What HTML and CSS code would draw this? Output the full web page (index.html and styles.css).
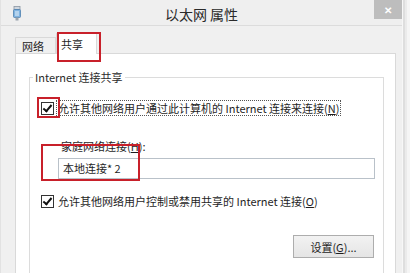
FILE: index.html
```html
<!DOCTYPE html>
<html lang="zh-CN">
<head>
  <meta charset="UTF-8" />
  <title>以太网 属性</title>
  <link rel="stylesheet" href="styles.css">
</head>
<body>

  <div class="screen">
    <div class="window">

      <div class="titlebar">
        <svg class="app-icon" width="8" height="15" viewBox="0 0 8 15">
          <rect x="1" y="0.5" width="6" height="3" fill="#cfd6de" stroke="#8a96a3" stroke-width="0.8"/>
          <rect x="0.5" y="3.5" width="7" height="8" rx="1" fill="#7fb3e0" stroke="#4d7fae" stroke-width="0.8"/>
          <line x1="3" y1="5" x2="3" y2="10" stroke="#e8f2fb" stroke-width="1"/>
          <line x1="5" y1="5" x2="5" y2="10" stroke="#e8f2fb" stroke-width="1"/>
          <rect x="2.5" y="11.5" width="3" height="3" fill="#9aa4ae"/>
        </svg>
        <div class="title">以太网&nbsp;属性</div>
        <div class="close">✕</div>
      </div>

      <div class="client">
        <div class="tabs">
          <div class="tab">网络</div>
          <div class="tab active">共享</div>
        </div>

        <div class="panel">
          <fieldset class="group">
            <legend>Internet 连接共享</legend>

            <div class="check-row">
              <span class="box checked"></span>
              <span class="check-text focus">允许其他网络用户通过此计算机的 Internet 连接来连接(<u>N</u>)</span>
            </div>

            <div class="field-label">家庭网络连接(<u>H</u>):</div>
            <div class="input">本地连接* 2</div>

            <div class="check-row second">
              <span class="box checked"></span>
              <span class="check-text">允许其他网络用户控制或禁用共享的 Internet 连接(<u>O</u>)</span>
            </div>

            <div class="actions">
              <button class="btn">设置(<u>G</u>)...</button>
            </div>
          </fieldset>
        </div>
      </div>

      <div class="mark mark-tab"></div>
      <div class="mark mark-check"></div>
      <div class="mark mark-input"></div>
    </div>

    <div class="frame"></div>
  </div>

</body>
</html>
```

FILE: styles.css
```css
body {
  margin: 0;
  font-family: "Noto Sans CJK SC", "Noto Sans", sans-serif;
  font-size: 11px;
  color: #1e1e1e;
  background: #f0f0f0;
}

.screen {
  display: flex;
  width: 410px;
  height: 273px;
  overflow: hidden;
}

.window {
  position: relative;
  width: 401px;
  background: #f0f0f0;
  border-left: 1px solid #e2e2e2;
}

.frame {
  flex: 1;
  background: #ebebeb;
  border-left: 1px solid #f7f7f7;
  box-shadow: inset 2px 0 0 #dedede, inset -3px 0 0 #f5f5f5;
}

/* title bar */

.titlebar {
  display: grid;
  grid-template-columns: 1fr auto 1fr;
  height: 25px;
  border-bottom: 1px solid #dcdcdc;
  background: #efefef;
}

.app-icon {
  margin: 6px 0 0 12px;
}

.title {
  font-size: 14px;
  line-height: 18px;
  padding-top: 5px;
  color: #2a2a2a;
}

.close {
  justify-self: end;
  width: 28px;
  height: 19px;
  background: #bdbdbd;
  color: #fff;
  font-size: 10px;
  font-weight: bold;
  line-height: 19px;
  text-align: center;
}

/* tabs */

.client {
  padding: 7px 6px 0 14px;
}

.tabs {
  display: flex;
  align-items: flex-end;
  height: 20px;
}

.tab {
  height: 16px;
  line-height: 16px;
  padding: 0 8px 0 6px;
  border: 1px solid #d9d9d9;
  border-bottom: none;
  background: #f0f0f0;
  box-sizing: border-box;
  width: 41px;
}

.tab.active {
  height: 21px;
  width: 41px;
  margin-bottom: -1px;
  padding: 2px 0 0 4px;
  background: #fff;
  position: relative;
  z-index: 1;
}

.panel {
  background: #fff;
  border: 1px solid #d9d9d9;
  height: 240px;
  padding: 0 11px 0 13px;
}

/* group box */

.group {
  margin: 16px 0 0;
  padding: 16px 8px 20px 11px;
  border: 1px solid #dcdcdc;
  min-width: 0;
}

.group legend {
  padding: 0 2px;
  margin-left: -8px;
  line-height: 14px;
  color: #2a2a2a;
}

.check-row {
  display: flex;
  align-items: center;
  gap: 3px;
  height: 16px;
}

.check-row.second {
  margin-top: 14px;
}

.box {
  width: 11px;
  height: 11px;
  border: 1px solid #333;
  background: #fff;
  position: relative;
  flex: none;
}

.box.checked::after {
  content: "";
  position: absolute;
  left: 3px;
  top: 0px;
  width: 3px;
  height: 7px;
  border: solid #111;
  border-width: 0 2px 2px 0;
  transform: rotate(40deg);
}

.check-text {
  line-height: 14px;
  padding: 0 1px;
}

.check-text.focus {
  outline: 1px dotted #555;
}

.field-label {
  margin: 23px 0 0 20px;
  line-height: 14px;
}

.input {
  margin: 5px 0 0 17px;
  height: 21px;
  box-sizing: border-box;
  border: 1px solid #b9c1c9;
  padding-left: 4px;
  line-height: 19px;
}

.actions {
  display: flex;
  justify-content: flex-end;
  margin-top: 26px;
  padding-right: 1px;
}

.btn {
  width: 81px;
  height: 23px;
  font-family: inherit;
  font-size: 11px;
  color: #1e1e1e;
  border: 1px solid #adadad;
  background: linear-gradient(#f2f2f2, #e5e5e5);
  padding: 0;
}

/* red annotation boxes */

.mark {
  position: absolute;
  border: 2px solid #c8202a;
  z-index: 2;
}

.mark-tab {
  left: 56px;
  top: 32px;
  width: 40px;
  height: 26px;
}

.mark-check {
  left: 36px;
  top: 97px;
  width: 19px;
  height: 17px;
}

.mark-input {
  left: 40px;
  top: 144px;
  width: 95px;
  height: 33px;
}
```
